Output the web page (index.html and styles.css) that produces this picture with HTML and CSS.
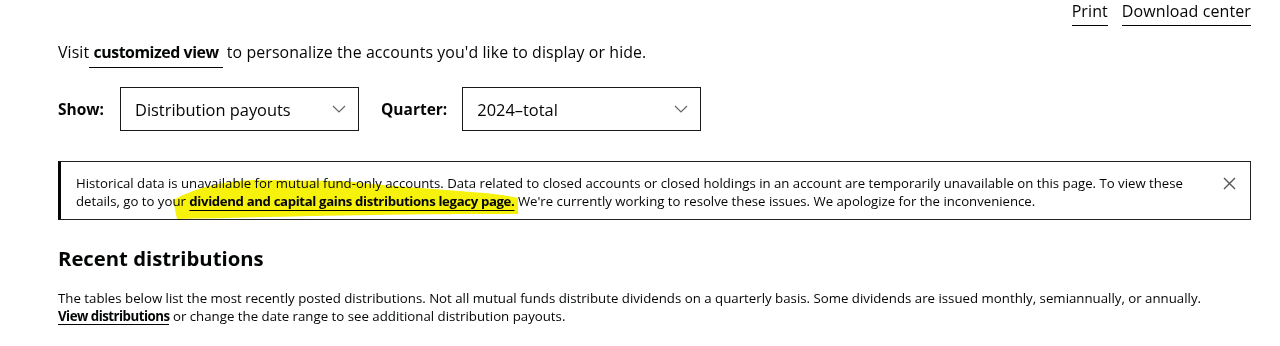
FILE: index.html
```html
<!DOCTYPE html>
<html lang="en">
<head>
	<meta charset="utf-8" />
	<title>Distributions</title>
	<link rel="stylesheet" href="styles.css">
</head>
<body>
	<div class="page">
		<div class="tools">
			<a href="#">Print</a>
			<a href="#">Download center</a>
		</div>
		<p class="visit">Visit <a href="#">customized view</a> to personalize the accounts you'd like to display or hide.</p>
		<div class="filters">
			<span class="label">Show:</span>
			<div class="select sel-show">
				<span>Distribution payouts</span>
				<svg width="14" height="8" viewBox="0 0 14 8"><path d="M1 1l6 6 6-6" fill="none" stroke="#666" stroke-width="1.2"/></svg>
			</div>
			<span class="label">Quarter:</span>
			<div class="select sel-quarter">
				<span>2024–total</span>
				<svg width="14" height="8" viewBox="0 0 14 8"><path d="M1 1l6 6 6-6" fill="none" stroke="#666" stroke-width="1.2"/></svg>
			</div>
		</div>
		<div class="notice">
			<svg class="marker" width="400" height="50" viewBox="0 0 400 50"><path d="M0 22 C20 12 40 4 80 2 L170 3 C200 6 230 9 260 11 C300 14 330 16 345 20 L345 36 C300 36 250 36 200 37 C130 38 60 40 4 41 Z" fill="#f7f20c"/></svg>
			<p>Historical data is unavailable for mutual fund-only accounts. Data related to closed accounts or closed holdings in an account are temporarily unavailable on this page. To view these details, go to your <a href="#">dividend and capital gains distributions legacy page.</a> We're currently working to resolve these issues. We apologize for the inconvenience.</p>
			<button class="close"><svg width="13" height="13" viewBox="0 0 13 13"><path d="M1 1l11 11M12 1L1 12" stroke="#555" stroke-width="1.4"/></svg></button>
		</div>
		<h2>Recent distributions</h2>
		<p class="intro">The tables below list the most recently posted distributions. Not all mutual funds distribute dividends on a quarterly basis. Some dividends are issued monthly, semiannually, or annually.<br />
		<a href="#">View distributions</a> or change the date range to see additional distribution payouts.</p>
	</div>
</body>
</html>
```

FILE: styles.css
```css
body{
	margin: 0;
	font-family: "Open Sans", "Liberation Sans", sans-serif;
	color: #040505;
	background: #fff;
}
a{
	color: #040505;
	text-decoration: none;
}
.page{
	padding: 0 29px 0 58px;
}
.tools{
	display: flex;
	justify-content: flex-end;
	gap: 14px;
	height: 24px;
	padding-top: 2px;
	font-size: 16px;
}
.tools a{
	border-bottom: 1px solid #040505;
	line-height: 19px;
	letter-spacing: 0.1px;
}
.visit{
	margin: 16px 0 0 0;
	font-size: 15.9px;
	line-height: 20px;
	letter-spacing: 0.1px;
}
.visit a{
	font-weight: 700;
	letter-spacing: -0.45px;
	border-bottom: 1px solid #040505;
	padding: 0 4px 4px 4px;
	margin-left: -4px;
}
.filters{
	display: flex;
	align-items: center;
	margin-top: 25px;
}
.label{
	font-weight: 700;
	font-size: 15.5px;
	margin-right: 15px;
}
.select{
	display: flex;
	align-items: center;
	justify-content: space-between;
	box-sizing: border-box;
	width: 239px;
	height: 44px;
	border: 1px solid #1a1a1a;
	padding: 0 12px 0 14px;
	font-size: 16.4px;
	margin-right: 22px;
}
.sel-show{
	margin-left: 1px;
}
.notice{
	position: relative;
	display: flex;
	align-items: flex-start;
	margin-top: 30px;
	border: 1px solid #222;
	border-left: 3px solid #040505;
	padding: 12px 14px 9px 15px;
}
.notice p{
	position: relative;
	margin: 0;
	flex: 1;
	font-size: 13.2px;
	line-height: 18px;
}
.notice p a{
	font-weight: 700;
	letter-spacing: -0.35px;
	text-decoration: underline;
	text-underline-offset: 4px;
	text-decoration-thickness: 1px;
}
.marker{
	position: absolute;
	left: 112px;
	top: 16px;
	mix-blend-mode: multiply;
}
.close{
	border: 0;
	background: none;
	padding: 0;
	margin: 3px 0 0 18px;
	line-height: 0;
}
h2{
	margin: 25px 0 0 0;
	font-size: 20.3px;
	line-height: 26px;
}
.intro{
	margin: 18px 0 0 0;
	font-size: 13.25px;
	line-height: 18px;
}
.intro a{
	display: inline-block;
	font-weight: 700;
	letter-spacing: -0.5px;
	line-height: 16px;
	border-bottom: 1px solid #040505;
}
```
